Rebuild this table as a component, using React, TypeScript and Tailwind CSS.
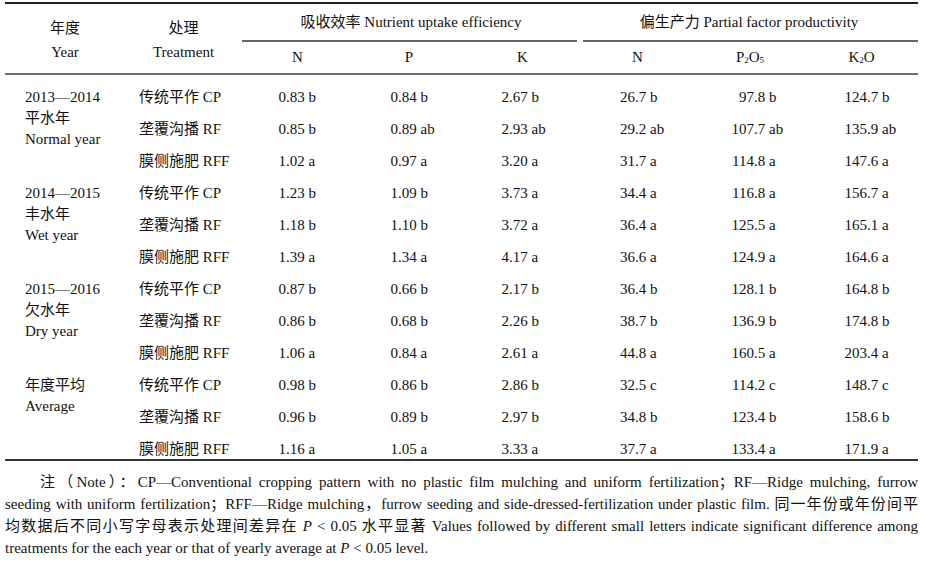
import type { ReactNode } from "react";

const FONT = "font-['Liberation_Serif','Noto_Sans_CJK_SC',serif]";

// column spec: width and left pad so the decimal points line up
const COLS = [
  { w: "w-[111px]", pl: "pl-[20px]" },
  { w: "w-[112px]", pl: "pl-[21px]" },
  { w: "w-[115px]", pl: "pl-[20px]" },
  { w: "w-[115px]", pl: "pl-[31px]" },
  { w: "w-[110px]", pl: "pl-[35px]" },
  { w: "w-[113px]", pl: "pl-[38px]" },
];

interface Group {
  year: string[];
  rows: string[][];
}

const GROUPS: Group[] = [
  {
    year: ["2013—2014", "平水年", "Normal year"],
    rows: [
      ["传统平作 CP", "0.83 b", "0.84 b", "2.67 b", "26.7 b", "97.8 b", "124.7 b"],
      ["垄覆沟播 RF", "0.85 b", "0.89 ab", "2.93 ab", "29.2 ab", "107.7 ab", "135.9 ab"],
      ["膜侧施肥 RFF", "1.02 a", "0.97 a", "3.20 a", "31.7 a", "114.8 a", "147.6 a"],
    ],
  },
  {
    year: ["2014—2015", "丰水年", "Wet year"],
    rows: [
      ["传统平作 CP", "1.23 b", "1.09 b", "3.73 a", "34.4 a", "116.8 a", "156.7 a"],
      ["垄覆沟播 RF", "1.18 b", "1.10 b", "3.72 a", "36.4 a", "125.5 a", "165.1 a"],
      ["膜侧施肥 RFF", "1.39 a", "1.34 a", "4.17 a", "36.6 a", "124.9 a", "164.6 a"],
    ],
  },
  {
    year: ["2015—2016", "欠水年", "Dry year"],
    rows: [
      ["传统平作 CP", "0.87 b", "0.66 b", "2.17 b", "36.4 b", "128.1 b", "164.8 b"],
      ["垄覆沟播 RF", "0.86 b", "0.68 b", "2.26 b", "38.7 b", "136.9 b", "174.8 b"],
      ["膜侧施肥 RFF", "1.06 a", "0.84 a", "2.61 a", "44.8 a", "160.5 a", "203.4 a"],
    ],
  },
  {
    year: ["年度平均", "Average"],
    rows: [
      ["传统平作 CP", "0.98 b", "0.86 b", "2.86 b", "32.5 c", "114.2 c", "148.7 c"],
      ["垄覆沟播 RF", "0.96 b", "0.89 b", "2.97 b", "34.8 b", "123.4 b", "158.6 b"],
      ["膜侧施肥 RFF", "1.16 a", "1.05 a", "3.33 a", "37.7 a", "133.4 a", "171.9 a"],
    ],
  },
];

function Value({ v }: { v: string }) {
  const i = v.indexOf(".");
  return (
    <span className="whitespace-pre">
      <span className="inline-block w-[24px] text-right">{v.slice(0, i)}</span>
      {v.slice(i)}
    </span>
  );
}

function Sub({ children }: { children: ReactNode }) {
  return <span className="relative top-[3px] text-[9px]">{children}</span>;
}

const SUBHEADS: ReactNode[] = [
  "N",
  "P",
  "K",
  "N",
  <>
    P<Sub>2</Sub>O<Sub>5</Sub>
  </>,
  <>
    K<Sub>2</Sub>O
  </>,
];

export default function App() {
  return (
    <div className={`${FONT} min-h-[564px] w-[925px] bg-white pt-[2px] text-[15px] text-[#111]`}>
      <div className="ml-[5px] w-[913px]">
        {/* header */}
        <div className="flex h-[73px] border-y-2 border-t-[#222] border-b-[#707070]">
          <div className="flex w-[120px] flex-col items-center pt-[3px] leading-[24px] justify-center">
            <div>年度</div>
            <div>Year</div>
          </div>
          <div className="flex w-[117px] flex-col items-center pt-[3px] leading-[24px] justify-center">
            <div>处理</div>
            <div>Treatment</div>
          </div>
          {[0, 1].map((g) => (
            <div key={g} className="flex w-[338px] flex-col">
              <div className="flex h-[36px] items-center justify-center">
                {g === 0 ? "吸收效率 Nutrient uptake efficiency" : "偏生产力 Partial factor productivity"}
              </div>
              <div className={`h-[1.5px] bg-[#666] ${g === 0 ? "mr-[3px]" : "ml-[3px]"}`} />
              <div className="flex flex-1">
                {COLS.slice(g * 3, g * 3 + 3).map((c, k) => (
                  <div key={k} className={`${c.w} flex items-center justify-center`}>
                    {SUBHEADS[g * 3 + k]}
                  </div>
                ))}
              </div>
            </div>
          ))}
        </div>

        {/* body */}
        <div className="border-b-2 border-[#333]">
          {GROUPS.map((grp) => (
            <div key={grp.year[0]} className="flex">
              <div className="w-[120px] pl-[20px] pt-[12px] leading-[21px]">
                {grp.year.map((y) => (
                  <div key={y}>{y}</div>
                ))}
              </div>
              <div className="flex flex-col">
                {grp.rows.map((r) => (
                  <div key={r[0]} className="flex h-[32px] pt-[13px] leading-[18px]">
                    <div className="w-[117px] pl-[14px] whitespace-nowrap">{r[0]}</div>
                    {r.slice(1).map((v, k) => (
                      <div key={k} className={`${COLS[k].w} ${COLS[k].pl}`}>
                        <Value v={v} />
                      </div>
                    ))}
                  </div>
                ))}
              </div>
            </div>
          ))}
        </div>

        {/* note */}
        <div className="mt-[10px] leading-[22px]">
          <div className="pl-[35px] text-justify [text-align-last:justify]">
            注（Note）：CP—Conventional cropping pattern with no plastic film mulching and uniform fertilization；RF—Ridge mulching, furrow
          </div>
          <div className="text-justify [text-align-last:justify]">
            seeding with uniform fertilization；RFF—Ridge mulching，furrow seeding and side-dressed-fertilization under plastic film. 同一年份或年份间平
          </div>
          <div className="text-justify [text-align-last:justify]">
            均数据后不同小写字母表示处理间差异在 <i>P</i> &lt; 0.05 水平显著 Values followed by different small letters indicate significant difference among
          </div>
          <div>
            treatments for the each year or that of yearly average at <i>P</i> &lt; 0.05 level.
          </div>
        </div>
      </div>
    </div>
  );
}
